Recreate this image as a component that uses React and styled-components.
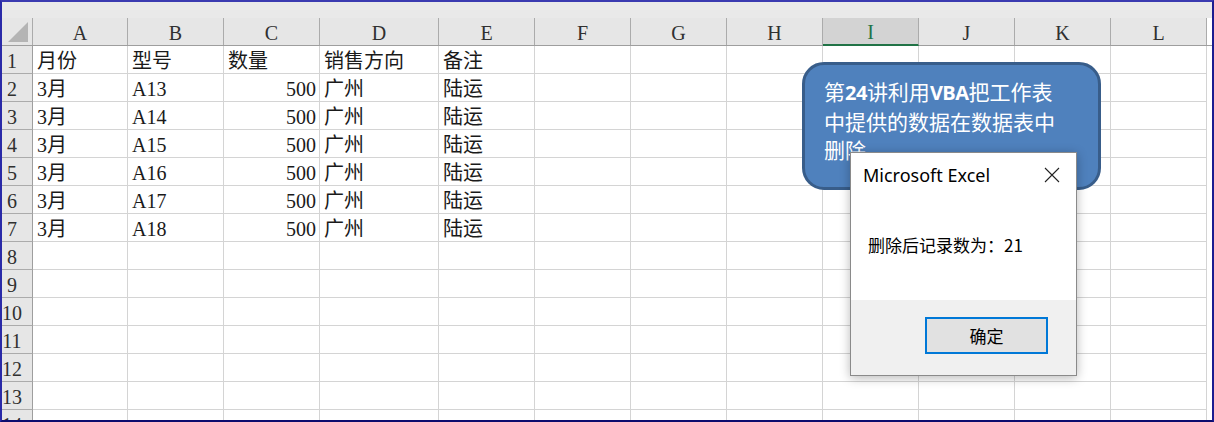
import React from "react";
import styled, { createGlobalStyle } from "styled-components";

const GlobalStyle = createGlobalStyle`
  html, body {
    margin: 0;
    padding: 0;
    background: #ffffff;
  }
`;

const columns = [
  { name: "A", width: 95 },
  { name: "B", width: 96 },
  { name: "C", width: 96 },
  { name: "D", width: 119 },
  { name: "E", width: 96 },
  { name: "F", width: 96 },
  { name: "G", width: 96 },
  { name: "H", width: 96 },
  { name: "I", width: 96, selected: true },
  { name: "J", width: 96 },
  { name: "K", width: 96 },
  { name: "L", width: 96 },
];

const data = [
  ["月份", "型号", "数量", "销售方向", "备注"],
  ["3月", "A13", "500", "广州", "陆运"],
  ["3月", "A14", "500", "广州", "陆运"],
  ["3月", "A15", "500", "广州", "陆运"],
  ["3月", "A16", "500", "广州", "陆运"],
  ["3月", "A17", "500", "广州", "陆运"],
  ["3月", "A18", "500", "广州", "陆运"],
];

const gridTemplate = `31px ${columns.map((c) => c.width + "px").join(" ")} 1fr`;

const Frame = styled.div`
  position: relative;
  box-sizing: border-box;
  width: 1214px;
  height: 422px;
  overflow: hidden;
  border-left: 2px solid #2a2aa8;
  border-right: 2px solid #1c1c90;
  border-top: 2px solid #3a3ab0;
  border-bottom: 2px solid #0c0c6e;
  background: #ffffff;
`;

const TopBand = styled.div`
  height: 16px;
  background: #e9e9e9;
`;

const HeaderRow = styled.div`
  display: grid;
  grid-template-columns: ${gridTemplate};
  height: 27px;
  background: #e6e6e6;
  border-bottom: 1px solid #9e9e9e;
  box-sizing: content-box;
`;

const Corner = styled.div`
  position: relative;
  border-right: 1px solid #ababab;
  box-sizing: border-box;
  &::after {
    content: "";
    position: absolute;
    right: 4px;
    bottom: 3px;
    width: 0;
    height: 0;
    border-left: 20px solid transparent;
    border-bottom: 20px solid #b4b4b4;
  }
`;

const ColHeader = styled.div`
  box-sizing: border-box;
  border-right: 1px solid #ababab;
  display: flex;
  align-items: flex-end;
  justify-content: center;
  padding-bottom: 0;
  font-family: "Liberation Serif", "DejaVu Serif", serif;
  font-size: 20px;
  line-height: 24px;
  color: ${(p) => (p.$selected ? "#217346" : "#303030")};
  background: ${(p) => (p.$selected ? "#d3d3d3" : "transparent")};
  border-bottom: ${(p) => (p.$selected ? "2px solid #217346" : "none")};
  margin-bottom: ${(p) => (p.$selected ? "-1px" : "0")};
`;

const HeaderTail = styled.div`
  background: #ffffff;
`;

const Row = styled.div`
  display: grid;
  grid-template-columns: ${gridTemplate};
  height: 28px;
`;

const RowHeader = styled.div`
  box-sizing: border-box;
  background: #e6e6e6;
  border-right: 1px solid #9e9e9e;
  border-bottom: 1px solid #ababab;
  display: flex;
  align-items: flex-end;
  justify-content: center;
  padding-right: 10px;
  padding-bottom: 1px;
  font-family: "Liberation Serif", "DejaVu Serif", serif;
  font-size: 20px;
  line-height: 22px;
  color: #303030;
`;

const Cell = styled.div`
  box-sizing: border-box;
  border-right: 1px solid #d4d4d4;
  border-bottom: 1px solid #d4d4d4;
  display: flex;
  align-items: flex-end;
  justify-content: ${(p) => (p.$number ? "flex-end" : "flex-start")};
  padding: 0 3px 0 4px;
  font-family: "Liberation Serif", "Noto Sans CJK SC", serif;
  font-size: 20px;
  line-height: 24px;
  color: #1a1a1a;
  white-space: nowrap;
  overflow: hidden;
`;

const TailCell = styled.div`
  background: #ffffff;
`;

const NoteBox = styled.div`
  position: absolute;
  left: 800px;
  top: 60px;
  width: 299px;
  height: 128px;
  box-sizing: border-box;
  background: #4f81bd;
  border: 3px solid #385d8a;
  border-radius: 22px;
  padding: 12px 10px 0 19px;
  color: #ffffff;
  font-family: "Noto Sans CJK SC", "Noto Sans", sans-serif;
  font-size: 21px;
  line-height: 28px;
`;

const Strong = styled.span`
  font-family: "Open Sans", "Noto Sans", sans-serif;
  font-weight: 700;
  font-size: 20px;
  letter-spacing: -0.5px;
`;

const Dialog = styled.div`
  position: absolute;
  left: 848px;
  top: 150px;
  width: 227px;
  height: 224px;
  box-sizing: border-box;
  border: 1px solid #8a8a8a;
  background: #ffffff;
  box-shadow: 0 2px 10px rgba(0, 0, 0, 0.28);
  display: flex;
  flex-direction: column;
  font-family: "Noto Sans", "Noto Sans CJK SC", sans-serif;
`;

const TitleBar = styled.div`
  display: flex;
  align-items: center;
  justify-content: space-between;
  height: 44px;
  padding: 0 16px 0 12px;
  font-size: 18px;
  color: #000000;
`;

const CloseIcon = styled.svg`
  width: 16px;
  height: 16px;
`;

const Body = styled.div`
  flex: 1;
  display: flex;
  align-items: center;
  padding: 0 0 8px 17px;
  font-family: "Noto Sans CJK SC", sans-serif;
  font-size: 17px;
  color: #000000;
`;

const Footer = styled.div`
  height: 75px;
  background: #f0f0f0;
  display: flex;
  align-items: flex-start;
  padding: 17px 0 0 74px;
  box-sizing: border-box;
`;

const Button = styled.div`
  box-sizing: border-box;
  width: 123px;
  height: 37px;
  border: 2px solid #0078d7;
  background: #e1e1e1;
  display: flex;
  align-items: center;
  justify-content: center;
  font-family: "Noto Sans CJK SC", sans-serif;
  font-size: 17px;
  color: #000000;
`;

export default function App() {
  const rows = [];
  for (let r = 0; r < 14; r++) rows.push(r);

  return (
    <>
      <GlobalStyle />
      <Frame>
        <TopBand />
        <HeaderRow>
          <Corner />
          {columns.map((c) => (
            <ColHeader key={c.name} $selected={c.selected}>
              {c.name}
            </ColHeader>
          ))}
          <HeaderTail />
        </HeaderRow>
        {rows.map((r) => (
          <Row key={r}>
            <RowHeader>{r + 1}</RowHeader>
            {columns.map((c, i) => {
              const value = data[r] ? data[r][i] : "";
              return (
                <Cell key={c.name} $number={r > 0 && i === 2}>
                  {value}
                </Cell>
              );
            })}
            <TailCell />
          </Row>
        ))}

        <NoteBox>
          第<Strong>24</Strong>讲利用<Strong>VBA</Strong>把工作表
          <br />
          中提供的数据在数据表中
          <br />
          删除
        </NoteBox>

        <Dialog>
          <TitleBar>
            <span>Microsoft Excel</span>
            <CloseIcon viewBox="0 0 16 16">
              <path d="M1 1 L15 15 M15 1 L1 15" stroke="#222" strokeWidth="1.1" fill="none" />
            </CloseIcon>
          </TitleBar>
          <Body>删除后记录数为：21</Body>
          <Footer>
            <Button>确定</Button>
          </Footer>
        </Dialog>
      </Frame>
    </>
  );
}
